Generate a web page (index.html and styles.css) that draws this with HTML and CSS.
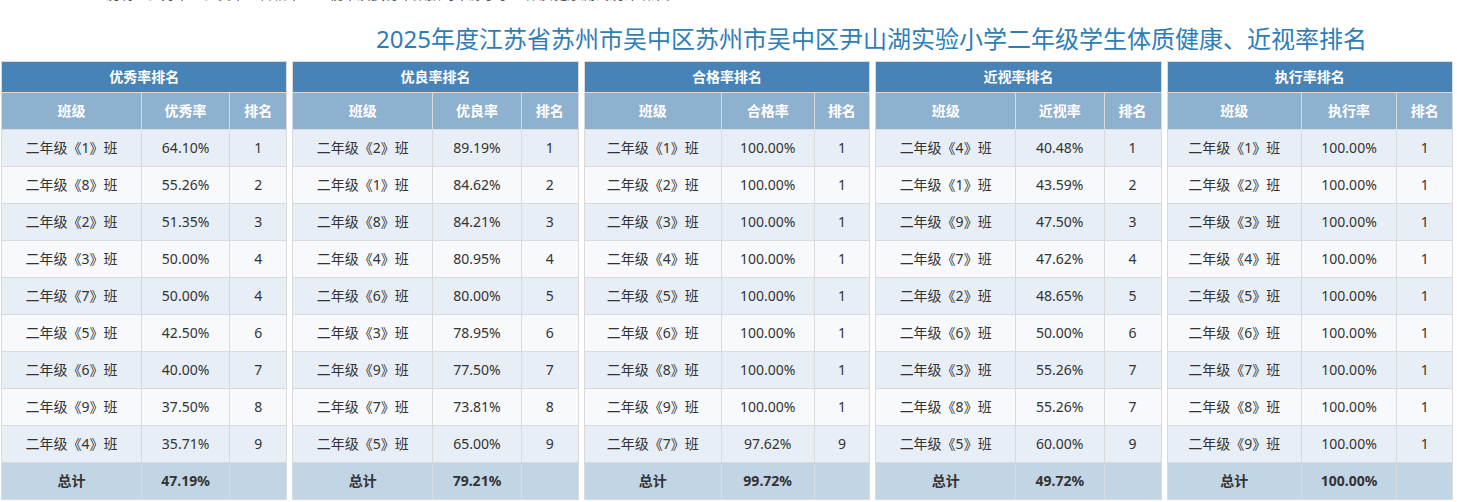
FILE: index.html
```html
<!DOCTYPE html>
<html lang="zh-CN">
<head>
<meta charset="utf-8">
<title>体质健康、近视率排名</title>
<link rel="stylesheet" href="styles.css">
</head>
<body>
<div class="topstrip"><div class="topline">说明：优秀率、优良率、合格率、近视率及执行率数据均来源于学生体质健康测试统计结果。</div></div>
<h1 class="title">2025年度江苏省苏州市吴中区苏州市吴中区尹山湖实验小学二年级学生体质健康、近视率排名</h1>
<div class="tables">
  <table class="rank">
    <colgroup><col class="c1"><col class="c2"><col class="c3"></colgroup>
    <thead>
      <tr><th colspan="3" class="cap">优秀率排名</th></tr>
      <tr class="sub"><th>班级</th><th>优秀率</th><th>排名</th></tr>
    </thead>
    <tbody>
      <tr><td>二年级《1》班</td><td>64.10%</td><td>1</td></tr>
      <tr><td>二年级《8》班</td><td>55.26%</td><td>2</td></tr>
      <tr><td>二年级《2》班</td><td>51.35%</td><td>3</td></tr>
      <tr><td>二年级《3》班</td><td>50.00%</td><td>4</td></tr>
      <tr><td>二年级《7》班</td><td>50.00%</td><td>4</td></tr>
      <tr><td>二年级《5》班</td><td>42.50%</td><td>6</td></tr>
      <tr><td>二年级《6》班</td><td>40.00%</td><td>7</td></tr>
      <tr><td>二年级《9》班</td><td>37.50%</td><td>8</td></tr>
      <tr><td>二年级《4》班</td><td>35.71%</td><td>9</td></tr>
      <tr class="total"><td>总计</td><td>47.19%</td><td></td></tr>
    </tbody>
  </table>
  <table class="rank">
    <colgroup><col class="c1"><col class="c2"><col class="c3"></colgroup>
    <thead>
      <tr><th colspan="3" class="cap">优良率排名</th></tr>
      <tr class="sub"><th>班级</th><th>优良率</th><th>排名</th></tr>
    </thead>
    <tbody>
      <tr><td>二年级《2》班</td><td>89.19%</td><td>1</td></tr>
      <tr><td>二年级《1》班</td><td>84.62%</td><td>2</td></tr>
      <tr><td>二年级《8》班</td><td>84.21%</td><td>3</td></tr>
      <tr><td>二年级《4》班</td><td>80.95%</td><td>4</td></tr>
      <tr><td>二年级《6》班</td><td>80.00%</td><td>5</td></tr>
      <tr><td>二年级《3》班</td><td>78.95%</td><td>6</td></tr>
      <tr><td>二年级《9》班</td><td>77.50%</td><td>7</td></tr>
      <tr><td>二年级《7》班</td><td>73.81%</td><td>8</td></tr>
      <tr><td>二年级《5》班</td><td>65.00%</td><td>9</td></tr>
      <tr class="total"><td>总计</td><td>79.21%</td><td></td></tr>
    </tbody>
  </table>
  <table class="rank">
    <colgroup><col class="w1"><col class="w2"><col class="w3"></colgroup>
    <thead>
      <tr><th colspan="3" class="cap">合格率排名</th></tr>
      <tr class="sub"><th>班级</th><th>合格率</th><th>排名</th></tr>
    </thead>
    <tbody>
      <tr><td>二年级《1》班</td><td>100.00%</td><td>1</td></tr>
      <tr><td>二年级《2》班</td><td>100.00%</td><td>1</td></tr>
      <tr><td>二年级《3》班</td><td>100.00%</td><td>1</td></tr>
      <tr><td>二年级《4》班</td><td>100.00%</td><td>1</td></tr>
      <tr><td>二年级《5》班</td><td>100.00%</td><td>1</td></tr>
      <tr><td>二年级《6》班</td><td>100.00%</td><td>1</td></tr>
      <tr><td>二年级《8》班</td><td>100.00%</td><td>1</td></tr>
      <tr><td>二年级《9》班</td><td>100.00%</td><td>1</td></tr>
      <tr><td>二年级《7》班</td><td>97.62%</td><td>9</td></tr>
      <tr class="total"><td>总计</td><td>99.72%</td><td></td></tr>
    </tbody>
  </table>
  <table class="rank">
    <colgroup><col class="c1"><col class="c2"><col class="c3"></colgroup>
    <thead>
      <tr><th colspan="3" class="cap">近视率排名</th></tr>
      <tr class="sub"><th>班级</th><th>近视率</th><th>排名</th></tr>
    </thead>
    <tbody>
      <tr><td>二年级《4》班</td><td>40.48%</td><td>1</td></tr>
      <tr><td>二年级《1》班</td><td>43.59%</td><td>2</td></tr>
      <tr><td>二年级《9》班</td><td>47.50%</td><td>3</td></tr>
      <tr><td>二年级《7》班</td><td>47.62%</td><td>4</td></tr>
      <tr><td>二年级《2》班</td><td>48.65%</td><td>5</td></tr>
      <tr><td>二年级《6》班</td><td>50.00%</td><td>6</td></tr>
      <tr><td>二年级《3》班</td><td>55.26%</td><td>7</td></tr>
      <tr><td>二年级《8》班</td><td>55.26%</td><td>7</td></tr>
      <tr><td>二年级《5》班</td><td>60.00%</td><td>9</td></tr>
      <tr class="total"><td>总计</td><td>49.72%</td><td></td></tr>
    </tbody>
  </table>
  <table class="rank">
    <colgroup><col class="e1"><col class="e2"><col class="e3"></colgroup>
    <thead>
      <tr><th colspan="3" class="cap">执行率排名</th></tr>
      <tr class="sub"><th>班级</th><th>执行率</th><th>排名</th></tr>
    </thead>
    <tbody>
      <tr><td>二年级《1》班</td><td>100.00%</td><td>1</td></tr>
      <tr><td>二年级《2》班</td><td>100.00%</td><td>1</td></tr>
      <tr><td>二年级《3》班</td><td>100.00%</td><td>1</td></tr>
      <tr><td>二年级《4》班</td><td>100.00%</td><td>1</td></tr>
      <tr><td>二年级《5》班</td><td>100.00%</td><td>1</td></tr>
      <tr><td>二年级《6》班</td><td>100.00%</td><td>1</td></tr>
      <tr><td>二年级《7》班</td><td>100.00%</td><td>1</td></tr>
      <tr><td>二年级《8》班</td><td>100.00%</td><td>1</td></tr>
      <tr><td>二年级《9》班</td><td>100.00%</td><td>1</td></tr>
      <tr class="total"><td>总计</td><td>100.00%</td><td></td></tr>
    </tbody>
  </table>
</div>
</body>
</html>
```
FILE: styles.css
```css
html, body {
  margin: 0;
  padding: 0;
  background: #ffffff;
}
body {
  font-family: "Noto Sans", "Noto Sans CJK SC", sans-serif;
  color: #333333;
  overflow: hidden;
}
.topstrip {
  height: 4px;
  overflow: hidden;
}
.topline {
  margin-top: -16px;
  padding-left: 105px;
  font-size: 14px;
  line-height: 20px;
  color: #555555;
  white-space: nowrap;
}
.title {
  margin: 19px 0 6px 0;
  padding-left: 376px;
  font-size: 24px;
  line-height: 32px;
  font-weight: normal;
  color: #2f7db6;
  white-space: nowrap;
}
.tables {
  display: flex;
  gap: 5px;
  padding: 0 4px 0 1px;
}
.rank {
  flex: 1 1 0;
  min-width: 0;
  table-layout: fixed;
  border-collapse: collapse;
  border: 1px solid #d6d6d6;
  font-size: 14px;
  text-align: center;
}
.rank .c1 { width: 49%; }
.rank .c2 { width: 31%; }
.rank .c3 { width: 20%; }
.rank .w1 { width: 48%; }
.rank .w2 { width: 32.5%; }
.rank .w3 { width: 19.5%; }
.rank .e1 { width: 47%; }
.rank .e2 { width: 33.5%; }
.rank .e3 { width: 19.5%; }
.rank th, .rank td {
  border: 1px solid #dadada;
  padding: 0 2px 2px 2px;
  white-space: nowrap;
  overflow: hidden;
}
.rank th {
  color: #ffffff;
  font-weight: bold;
}
.rank .cap {
  background: #4783b6;
  height: 28px;
  font-size: 14px;
}
.rank .sub th {
  background: #8fb1d0;
  height: 34px;
}
.rank td {
  height: 34px;
  color: #333333;
}
.rank tbody tr:nth-child(odd) td {
  background: #e8eef6;
}
.rank tbody tr:nth-child(even) td {
  background: #f7f9fc;
}
.rank tbody tr.total td {
  background: #c2d5e5;
  font-weight: bold;
  color: #333333;
}
```
